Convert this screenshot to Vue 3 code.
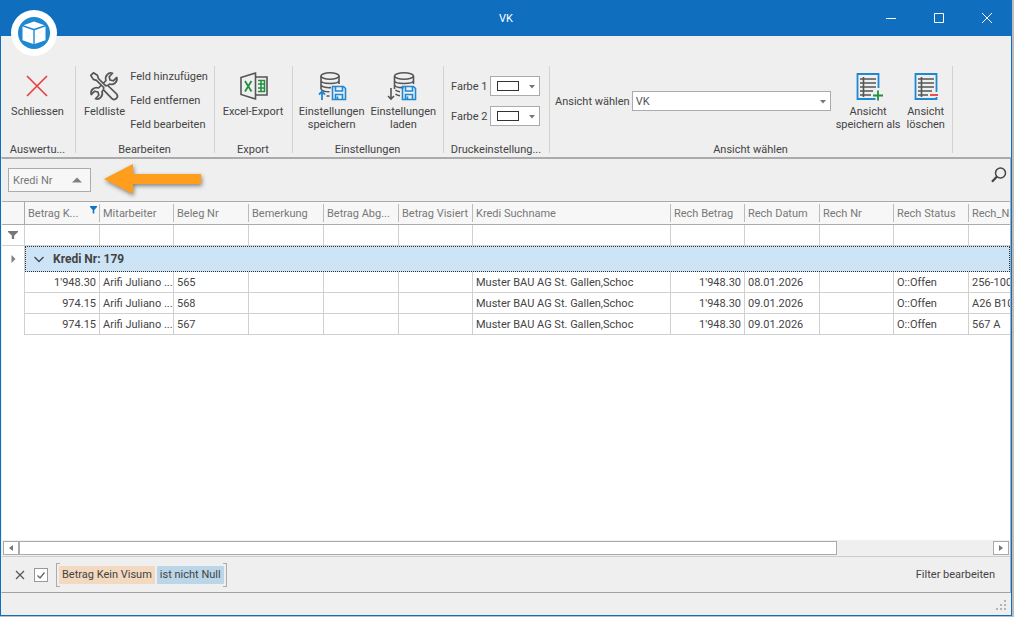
<script setup>
import { ref } from 'vue'

const columns = [
  { title: 'Betrag K...', width: 75, align: 'right', filtered: true },
  { title: 'Mitarbeiter', width: 74 },
  { title: 'Beleg Nr', width: 75 },
  { title: 'Bemerkung', width: 75 },
  { title: 'Betrag Abg...', width: 75 },
  { title: 'Betrag Visiert', width: 74 },
  { title: 'Kredi Suchname', width: 198 },
  { title: 'Rech Betrag', width: 74, align: 'right' },
  { title: 'Rech Datum', width: 75 },
  { title: 'Rech Nr', width: 74 },
  { title: 'Rech Status', width: 75 },
  { title: 'Rech_N', width: 0 }
]

const rows = [
  ["1'948.30", 'Arifi Juliano ...', '565', '', '', '', 'Muster BAU AG St. Gallen,Schoc', "1'948.30", '08.01.2026', '', 'O::Offen', '256-100'],
  ['974.15', 'Arifi Juliano ...', '568', '', '', '', 'Muster BAU AG St. Gallen,Schoc', "1'948.30", '09.01.2026', '', 'O::Offen', 'A26 B10'],
  ['974.15', 'Arifi Juliano ...', '567', '', '', '', 'Muster BAU AG St. Gallen,Schoc', "1'948.30", '09.01.2026', '', 'O::Offen', '567 A']
]

const filterActive = ref(true)
const view = ref('VK')
</script>

<template>
  <div class="desktop">
    <div class="window">
      <header class="titlebar">
        <h1 class="title">VK</h1>
        <div class="controls">
          <button type="button" aria-label="Minimieren">
            <svg width="12" height="12" viewBox="0 0 12 12"><path d="M1 6.500h10" /></svg>
          </button>
          <button type="button" aria-label="Maximieren">
            <svg width="12" height="12" viewBox="0 0 12 12"><path d="M1.500 1.500h9v9h-9z" /></svg>
          </button>
          <button type="button" aria-label="Fenster schliessen">
            <svg width="12" height="12" viewBox="0 0 12 12"><path d="M1 1l10 10M11 1L1 11" /></svg>
          </button>
        </div>
        <svg class="logo" width="46" height="46" viewBox="0 0 46 46">
          <circle cx="23" cy="23" r="23" fill="#fff" />
          <circle cx="23" cy="23" r="16" fill="#1e88d2" />
          <path d="M23 11.500l10.500 3.700L23 18.800l-10.500-3.600z" fill="#fff" />
          <path d="M11.500 16.500l10.800 3.700v13.800l-10.800-3.800z" fill="#fff" />
          <path d="M34.500 16.500l-10.800 3.700v13.800l10.800-3.800z" fill="#fff" />
        </svg>
      </header>

      <nav class="ribbon">
        <section class="group g-close">
          <div class="body">
            <button type="button" class="big">
              <svg width="32" height="32" viewBox="0 0 32 32"><path d="M6 5l20 20M26 5L6 25" fill="none" stroke="#ee3a3a" stroke-width="1.600" /></svg>
              <span>Schliessen</span>
            </button>
          </div>
          <h2>Auswertu...</h2>
        </section>

        <section class="group g-edit">
          <div class="body">
            <button type="button" class="big">
              <svg width="32" height="32" viewBox="-1 -1 32 32" fill="#efefef" stroke="#555" stroke-width="1.700" stroke-linejoin="round">
                <path d="M22.500 1.200L19.200 4.800 20 8l3.200.8 3.600-3.300c1.200 4.500-3.300 8-7.300 6.500L12 19.500c1.500 4-2 8.500-6.500 7.300l3.300-3.600L8 20l-3.200-.8-3.600 3.300C0 18 4.500 14.500 8.500 16L16 8.500C14.500 4.500 18 0 22.500 1.200z" />
                <path d="M.800 3.400L3.400.8 7.400 3.300 8.400 6.500l7.100 7.200 2.300-.2 9 8.700a3.300 3.300 0 0 1-4.600 4.600l-8.700-9 .2-2.300L6.500 8.400l-3.200-1z" />
              </svg>
              <span>Feldliste</span>
            </button>
            <div class="links">
              <button type="button">Feld hinzufügen</button>
              <button type="button">Feld entfernen</button>
              <button type="button">Feld bearbeiten</button>
            </div>
          </div>
          <h2>Bearbeiten</h2>
        </section>

        <section class="group g-export">
          <div class="body">
            <button type="button" class="big">
              <svg width="32" height="32" viewBox="-3 -1 32 32" fill="none" stroke="#555" stroke-width="1.600">
                <path d="M15.500 5H27v18H15.500" />
                <path d="M1 5.500L15.500 1v26L1 22.500z" />
                <g stroke="#21903f">
                  <path d="M5 9l6.500 10.500M11.500 9L5 19.500" stroke-width="1.800" />
                  <path d="M18 8.500h6.500v11H18M18 12h6.500M18 16h6.500M21 8.500v11" stroke-width="1.500" />
                </g>
              </svg>
              <span>Excel-Export</span>
            </button>
          </div>
          <h2>Export</h2>
        </section>

        <section class="group g-settings">
          <div class="body">
            <button type="button" class="big">
              <svg width="32" height="32" viewBox="-2 -1 32 32" fill="none" stroke="#555" stroke-width="1.600">
                <ellipse cx="12" cy="4" rx="9" ry="3.200" />
                <path d="M3 4v13M21 4v8M3 8.500c0 4 18 4 18 0M3 13c1 2.200 6 3 10 2.600M3 17c1 2 5 2.800 8.500 2.800M8.500 24h3" />
                <g stroke="#1e88d2">
                  <path d="M4 28v-8M1 22.500l3-3 3 3" stroke-width="1.800" />
                  <path d="M14.500 14.500h11l2 2v11h-13zM17.500 14.500v4.500h7v-4.500M17.500 27.500v-5h7v5M19.500 24.500v3" />
                </g>
              </svg>
              <span>Einstellungen<br />speichern</span>
            </button>
            <button type="button" class="big">
              <svg width="32" height="32" viewBox="-1 -1 32 32" fill="none" stroke="#555" stroke-width="1.600">
                <ellipse cx="16" cy="4" rx="9.500" ry="3.200" />
                <path d="M6.500 4v13M25.500 4v8M6.500 8.500c0 4 19 4 19 0M6.500 13c1 2.200 5 2.800 9 2.600M7.500 18c1 1 2 1.500 4.500 1.800M7.500 22c1 1 2 1.500 4.500 1.800" />
                <path d="M3 16v11M0 24l3 3 3-3" />
                <path d="M14.500 14.500h11l2 2v11h-13zM17.500 14.500v4.500h7v-4.500M17.500 27.500v-5h7v5M19.500 24.500v3" stroke="#1e88d2" />
              </svg>
              <span>Einstellungen<br />laden</span>
            </button>
          </div>
          <h2>Einstellungen</h2>
        </section>

        <section class="group g-print">
          <div class="body colors">
            <div v-for="n in 2" :key="n" class="field">
              <label :for="'farbe' + n">Farbe {{ n }}</label>
              <span class="combo swatch">
                <select :id="'farbe' + n"><option value="#ffffff" aria-label="Weiss"></option></select>
                <i class="chip"></i>
                <svg class="caret" width="8" height="4" viewBox="0 0 8 4"><path d="M1 0h6L4 3.500z" /></svg>
              </span>
            </div>
          </div>
          <h2>Druckeinstellung...</h2>
        </section>

        <section class="group g-view">
          <div class="body">
            <div class="field view">
              <label for="ansicht">Ansicht wählen</label>
              <span class="combo wide">
                <select id="ansicht" v-model="view"><option>VK</option></select>
                <svg class="caret" width="8" height="4" viewBox="0 0 8 4"><path d="M1 0h6L4 3.500z" /></svg>
              </span>
            </div>
            <button type="button" class="big">
              <svg width="32" height="32" viewBox="-1 0 32 32" fill="none">
                <path d="M25.500 17V3h-21v25h18" stroke="#1e88d2" stroke-width="1.800" />
                <path d="M7 8h16M7 12h16M7 16h16M7 20h13M7 24h11M10.500 6v20" stroke="#555" stroke-width="1.600" />
                <path d="M20 24.500h10M25 19.500v10" stroke="#21903f" stroke-width="1.800" />
              </svg>
              <span>Ansicht<br />speichern als</span>
            </button>
            <button type="button" class="big">
              <svg width="32" height="32" viewBox="1 0 32 32" fill="none">
                <path d="M27.500 21V3h-21v25h21v-2" stroke="#1e88d2" stroke-width="1.800" />
                <path d="M9 8h16M9 12h16M9 16h16M9 20h14M9 24h10M12.500 6v20" stroke="#555" stroke-width="1.600" />
                <path d="M21 24h8" stroke="#ee3a3a" stroke-width="1.800" />
              </svg>
              <span>Ansicht<br />löschen</span>
            </button>
          </div>
          <h2>Ansicht wählen</h2>
        </section>
      </nav>

      <main class="content">
        <div class="grouping">
          <button type="button" class="group-field">
            Kredi Nr
            <svg width="10" height="6" viewBox="0 0 10 6"><path d="M0 5.500L5 .500l5 5z" fill="#808080" /></svg>
          </button>
          <svg class="arrow" width="106" height="38" viewBox="0 0 106 38">
            <path d="M3 18L32 3v10h68v10H32v10z" fill="#ff9d1c" />
          </svg>
          <button type="button" class="search" aria-label="Suchen">
            <svg width="16" height="16" viewBox="0 0 16 16" fill="none" stroke="#444">
              <circle cx="9.500" cy="6" r="5" stroke-width="1.500" />
              <path d="M6 9.500L1 14.800" stroke-width="2.200" />
            </svg>
          </button>
        </div>

        <div class="grid">
          <table>
            <colgroup>
              <col class="col-mark" />
              <col v-for="c in columns" :key="c.title" :style="c.width ? { width: c.width + 'px' } : {}" />
            </colgroup>
            <thead>
              <tr>
                <th class="mark"></th>
                <th v-for="c in columns" :key="c.title" scope="col">
                  <span class="head">
                    {{ c.title }}
                    <svg v-if="c.filtered" width="7" height="8" viewBox="0 0 7 8"><path d="M0 0h7v1L4.300 4v3.500H2.700V4L0 1z" fill="#1073c4" /></svg>
                  </span>
                </th>
              </tr>
            </thead>
            <tbody>
              <tr class="filters">
                <td class="mark">
                  <svg width="10" height="8" viewBox="0 0 10 8"><path d="M0 0h10v1L6.200 4.500V8H3.800V4.500L0 1z" fill="#777" /></svg>
                </td>
                <td v-for="c in columns" :key="c.title"><input type="text" :aria-label="'Filter ' + c.title" /></td>
              </tr>
              <tr class="grouprow">
                <td class="mark">
                  <svg width="5" height="8" viewBox="0 0 5 8"><path d="M.500 0l4 4-4 4z" fill="#808080" /></svg>
                </td>
                <td :colspan="columns.length">
                  <button type="button">
                    <svg width="10" height="7" viewBox="0 0 10 7"><path d="M.500 1L5 5.500 9.500 1" fill="none" stroke="#444" stroke-width="1.300" /></svg>
                    Kredi Nr: 179
                  </button>
                </td>
              </tr>
              <tr v-for="(r, i) in rows" :key="i" class="data">
                <td class="mark"></td>
                <td v-for="(v, j) in r" :key="j" :class="{ num: columns[j].align === 'right' }">{{ v }}</td>
              </tr>
            </tbody>
          </table>
        </div>

        <div class="scroll">
          <button type="button" aria-label="Nach links">
            <svg width="4" height="6" viewBox="0 0 4 6"><path d="M4 0v6L0 3z" /></svg>
          </button>
          <div class="track"><div class="thumb"></div></div>
          <button type="button" aria-label="Nach rechts">
            <svg width="4" height="6" viewBox="0 0 4 6"><path d="M0 0v6l4-3z" /></svg>
          </button>
        </div>

        <div class="filterbar">
          <button type="button" class="clear" aria-label="Filter entfernen">
            <svg width="10" height="10" viewBox="0 0 10 10"><path d="M1 1l8 8M9 1L1 9" fill="none" stroke="#555" stroke-width="1.200" /></svg>
          </button>
          <label class="check">
            <input v-model="filterActive" type="checkbox" aria-label="Filter aktiv" />
            <svg v-if="filterActive" width="14" height="14" viewBox="0 0 14 14"><path d="M3.500 7.500l2.500 2.500 4.500-5.500" fill="none" stroke="#666" stroke-width="1.300" /></svg>
          </label>
          <div class="expression">
            <button type="button" class="prop">Betrag Kein Visum</button>
            <button type="button" class="op">ist nicht Null</button>
          </div>
          <button type="button" class="edit">Filter bearbeiten</button>
        </div>
      </main>

      <footer class="status">
        <svg width="10" height="10" viewBox="0 0 10 10" fill="#b4b4b4">
          <path d="M8 0h2v2H8zM4 4h2v2H4zM8 4h2v2H8zM0 8h2v2H0zM4 8h2v2H4zM8 8h2v2H8z" />
        </svg>
      </footer>
    </div>
  </div>
</template>

<style>
body {
  margin: 0;
  background: #bdbdbd;
}
</style>

<style scoped>
* {
  box-sizing: border-box;
}
.desktop {
  height: 100vh;
  padding: 0 2px 1px 0;
  font: 11px/13px Roboto, "Liberation Sans", sans-serif;
  color: #444;
}
.window {
  display: flex;
  flex-direction: column;
  height: 100%;
  background: #efefef;
  border: solid #106ebe;
  border-width: 0 1px 1px;
}
button {
  margin: 0;
  padding: 0;
  border: 0;
  background: none;
  font: inherit;
  color: inherit;
  white-space: nowrap;
}
svg {
  display: block;
  flex: none;
}
.titlebar {
  position: relative;
  display: grid;
  grid-template-columns: 1fr auto 1fr;
  align-items: center;
  height: 36px;
  flex: none;
  background: #106ebe;
  color: #fff;
}
.title {
  grid-column: 2;
  margin: 0;
  font: inherit;
}
.controls {
  display: flex;
  justify-content: flex-end;
}
.controls button {
  display: flex;
  align-items: center;
  justify-content: center;
  width: 48px;
  height: 36px;
}
.controls svg {
  fill: none;
  stroke: #fff;
}
.logo {
  position: absolute;
  left: 10px;
  top: 10px;
}
.ribbon {
  display: flex;
  flex: none;
  padding: 30px 0 1px;
}
.group {
  flex: none;
  display: flex;
  flex-direction: column;
  padding-right: 2px;
  background: linear-gradient(#d2d2d2, #d2d2d2) right top / 1px calc(100% - 3px) no-repeat;
}
.group h2 {
  margin: 0;
  font: inherit;
  text-align: center;
}
.body {
  display: flex;
  justify-content: center;
  height: 77px;
}
.g-close { width: 75px; }
.g-edit { width: 139px; }
.g-export { width: 78px; }
.g-settings { width: 151px; }
.g-print { width: 106px; }
.g-view { width: 403px; }
.big {
  display: flex;
  flex-direction: column;
  align-items: center;
  justify-content: flex-start;
  gap: 2px;
  padding: 5px 3px 0;
}
.links {
  display: flex;
  flex-direction: column;
  gap: 2px;
  padding-left: 2px;
}
.links button {
  line-height: 22px;
  text-align: left;
}
.colors {
  flex-direction: column;
  justify-content: flex-start;
  gap: 10px;
  padding: 10px 8px 0 7px;
}
.field {
  display: flex;
  align-items: center;
  gap: 2px;
  white-space: nowrap;
}
.colors .field {
  justify-content: space-between;
}
.g-view .body {
  justify-content: flex-start;
  padding-left: 5px;
}
.view {
  align-self: flex-start;
  padding: 25px 2px 0 0;
}
.combo {
  position: relative;
  display: block;
}
.combo select {
  display: block;
  width: 100%;
  height: 20px;
  padding: 0 3px;
  border: 1px solid #ababab;
  border-radius: 0;
  background: #fff;
  appearance: none;
  font: inherit;
  color: #555;
}
.swatch { width: 50px; }
.wide { width: 199px; }
.caret {
  position: absolute;
  right: 4px;
  top: 9px;
  fill: #777;
  pointer-events: none;
}
.chip {
  position: absolute;
  left: 7px;
  top: 5px;
  width: 22px;
  height: 10px;
  border: 1px solid #333;
  pointer-events: none;
}
.content {
  flex: 1;
  min-height: 0;
  display: flex;
  flex-direction: column;
  border: 1px solid #ababab;
  border-width: 2px 1px 1px;
  border-color: #ababab #ababab #a0a0a0 #efefef;
}
.grouping {
  display: flex;
  align-items: center;
  flex: none;
  height: 42px;
  padding: 0 3px 0 6px;
}
.group-field {
  display: flex;
  align-items: center;
  justify-content: space-between;
  width: 83px;
  height: 24px;
  padding: 0 8px 0 4px;
  border: 1px solid #ababab;
  background: #f7f7f7;
  color: #777;
}
.arrow {
  margin-left: 10px;
  filter: drop-shadow(1px 2px 2px rgba(0, 0, 0, 0.45));
}
.search {
  margin: 0 0 10px auto;
}
.grid {
  flex: 1;
  min-height: 0;
  overflow: hidden;
  background: #fff;
}
table {
  width: 100%;
  table-layout: fixed;
  border-collapse: separate;
  border-spacing: 0;
}
.col-mark { width: 23px; }
th {
  height: 24px;
  padding: 0 3px;
  border: solid #ababab;
  border-width: 1px 0;
  background: linear-gradient(#bbb, #bbb) right center / 1px 18px no-repeat #f7f7f7;
  font-weight: normal;
  text-align: left;
  color: #777;
  overflow: hidden;
  white-space: nowrap;
}
th:last-child {
  background: #f7f7f7;
}
.head {
  display: flex;
  justify-content: space-between;
}
.head svg {
  margin-top: -1px;
}
th.mark {
  background: #f7f7f7;
  border-right: 1px solid #ababab;
}
td {
  height: 21px;
  padding: 0 3px;
  border: solid #d0d0d0;
  border-width: 0 1px 1px 0;
  overflow: hidden;
  white-space: nowrap;
}
td:last-child,
th:last-child {
  border-right: 0;
  padding-right: 0;
}
.num {
  text-align: right;
}
td.mark {
  padding: 0;
}
td.mark svg {
  margin: 0 auto;
}
.data td.mark,
.grouprow td.mark {
  border-bottom: 0;
}
.filters td {
  padding: 0;
}
.filters input {
  display: block;
  width: 100%;
  height: 20px;
  padding: 0 3px;
  border: 0;
  background: none;
  font: inherit;
}
.grouprow td {
  height: 26px;
}
.grouprow td:last-child {
  padding: 0 8px;
  background: #cde4f7;
  border: 1px dotted #333;
}
.grouprow button {
  display: flex;
  align-items: center;
  gap: 9px;
  font-size: 12px;
  font-weight: bold;
}
.scroll {
  display: flex;
  flex: none;
  height: 17px;
  padding: 1px 1px;
  border-bottom: 1px solid #ccc;
}
.scroll button {
  display: flex;
  align-items: center;
  justify-content: center;
  width: 16px;
  border: 1px solid #ababab;
  background: #fff;
}
.scroll svg {
  fill: #777;
}
.track {
  flex: 1;
  display: flex;
}
.thumb {
  width: 84%;
  border: 1px solid #ababab;
  background: #fff;
}
.filterbar {
  display: flex;
  align-items: center;
  flex: none;
  height: 35px;
  padding: 0 15px 0 13px;
}
.check {
  position: relative;
  margin: 0 8px 0 9px;
}
.check input {
  display: block;
  width: 14px;
  height: 14px;
  margin: 0;
  border: 1px solid #999;
  background: #fff;
  appearance: none;
}
.check svg {
  position: absolute;
  left: 0;
  top: 0;
  pointer-events: none;
}
.expression {
  display: flex;
  align-items: center;
  gap: 2px;
  height: 24px;
  padding: 0 2px;
  border: solid #ababab;
  border-width: 0 1px;
  background:
    linear-gradient(#ababab, #ababab) left top / 3px 1px no-repeat,
    linear-gradient(#ababab, #ababab) left bottom / 3px 1px no-repeat,
    linear-gradient(#ababab, #ababab) right top / 3px 1px no-repeat,
    linear-gradient(#ababab, #ababab) right bottom / 3px 1px no-repeat;
}
.expression button {
  height: 18px;
  padding: 0 3px;
  border-radius: 1px;
}
.prop { background: #f3d9c0; }
.op { background: #bad6e8; }
.edit {
  margin-left: auto;
}
.status {
  display: flex;
  justify-content: flex-end;
  align-items: flex-end;
  flex: none;
  height: 22px;
  padding: 0 5px 5px;
}
</style>
